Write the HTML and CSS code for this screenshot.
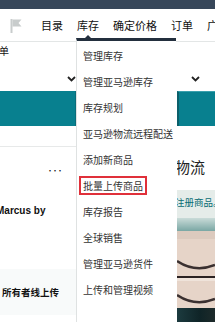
FILE: index.html
```html
<!DOCTYPE html>
<html lang="zh">
<head>
<meta charset="utf-8">
<link rel="stylesheet" href="styles.css">
</head>
<body>
<div class="topbar"></div>
<nav class="nav">
  <svg class="flag" width="14" height="15" viewBox="0 0 14 15"><path d="M1.5 1v14" stroke="#c8cccc" stroke-width="2"/><path d="M2.5 1.5h9l-3 3.5 3 3.5h-9z" fill="#c8cccc"/></svg>
  <span class="nav-item">目录</span>
  <span class="nav-item">库存</span>
  <span class="nav-item">确定价格</span>
  <span class="nav-item">订单</span>
  <span class="nav-item">广告</span>
</nav>
<div class="page">
  <div class="col-left">
    <div class="crumb"><span class="crumb-text">订单</span></div>
    <div class="select"><svg width="9" height="6" viewBox="0 0 9 6"><path d="M1 1l3.5 3.5L8 1" stroke="#222" stroke-width="1.8" fill="none"/></svg></div>
    <div class="teal teal-left"></div>
    <div class="rule"></div>
    <div class="dots">•••</div>
    <div class="name">Marcus by</div>
    <div class="panel"><span class="panel-text">所有者线上传</span></div>
  </div>
  <div class="col-mid"></div>
  <div class="col-right">
    <div class="crumb"></div>
    <div class="select select-right"><svg width="9" height="6" viewBox="0 0 9 6"><path d="M1 1l3.5 3.5L8 1" stroke="#222" stroke-width="1.8" fill="none"/></svg></div>
    <div class="teal teal-right"></div>
    <div class="heading">物流</div>
    <div class="promo"><span class="promo-text">注册商品。</span></div>
    <div class="stripe"></div>
    <svg class="photo" width="38" height="77" viewBox="0 0 38 77">
      <rect width="38" height="77" fill="#e6d4c8"/>
      <rect y="0" width="38" height="8" fill="#dccabe"/>
      <path d="M0 30 Q18 42 38 34" stroke="#3a3030" stroke-width="2.5" fill="none"/>
      <rect y="45" width="38" height="2" fill="#2b2222"/>
      <rect y="47" width="38" height="3" fill="#efe3da"/>
      <path d="M0 64 Q18 76 38 68" stroke="#3a3030" stroke-width="2.5" fill="none"/>
    </svg>
    <div class="photo-dark"></div>
  </div>
</div>
<div class="dropdown">
  <div class="caret"></div>
  <ul class="menu">
    <li class="menu-item">管理库存</li>
    <li class="menu-item">管理亚马逊库存</li>
    <li class="menu-item">库存规划</li>
    <li class="menu-item">亚马逊物流远程配送</li>
    <li class="menu-item">添加新商品</li>
    <li class="menu-item"><span class="highlight">批量上传商品</span></li>
    <li class="menu-item">库存报告</li>
    <li class="menu-item">全球销售</li>
    <li class="menu-item">管理亚马逊货件</li>
    <li class="menu-item">上传和管理视频</li>
  </ul>
</div>
</body>
</html>
```
FILE: styles.css
```css
html, body {
  margin: 0;
  padding: 0;
}
body {
  width: 215px;
  height: 322px;
  overflow: hidden;
  position: relative;
  background: #fff;
  font-family: "Noto Sans CJK SC", "Liberation Sans", sans-serif;
  color: #111;
}
.topbar {
  height: 9px;
  background: #37475a;
}
.nav {
  height: 32px;
  display: flex;
  align-items: center;
  gap: 14px;
  padding-left: 10px;
  border-bottom: 1px solid #e3e6e6;
  white-space: nowrap;
  font-size: 11px;
  overflow: hidden;
}
.flag {
  flex: none;
  margin-right: 3px;
}
.nav-item {
  flex: none;
  line-height: 14px;
}
.page {
  display: flex;
  height: 280px;
}
.col-left {
  width: 76px;
  flex: none;
  display: flex;
  flex-direction: column;
  overflow: hidden;
}
.col-mid {
  width: 101px;
  flex: none;
}
.col-right {
  flex: 1;
  display: flex;
  flex-direction: column;
  overflow: hidden;
}
.crumb {
  height: 14px;
  font-size: 10px;
  line-height: 14px;
  padding-top: 2px;
  white-space: nowrap;
  flex: none;
}
.crumb-text {
  display: inline-block;
  margin-left: -11px;
}
.select {
  height: 32px;
  display: flex;
  justify-content: flex-end;
  align-items: center;
  padding-top: 9px;
  box-sizing: border-box;
  flex: none;
}
.select-right {
  justify-content: flex-start;
  padding-left: 14px;
}
.teal {
  height: 35px;
  box-sizing: border-box;
  background: #08808f;
  margin-top: 1px;
  flex: none;
}
.teal-left {
  border-right: 1px solid #0a6d7a;
}
.teal-right {
  border-left: 2px solid #0b5f6a;
  border-top: 1px solid #3aa0ad;
}
.rule {
  height: 1px;
  background: #e7e9e9;
  margin-top: 20px;
  flex: none;
}
.dots {
  margin-top: 19px;
  font-size: 6px;
  line-height: 10px;
  text-align: right;
  padding-right: 14px;
  letter-spacing: -1px;
  color: #111;
  font-weight: bold;
}
.name {
  margin-top: 29px;
  font-family: "Liberation Sans", sans-serif;
  font-weight: bold;
  font-size: 10px;
  line-height: 12px;
  white-space: nowrap;
  margin-left: -4px;
  color: #111;
}
.panel {
  margin-top: 52px;
  height: 46px;
  background: #f8fafa;
  display: flex;
  align-items: center;
  padding-left: 2px;
  flex: none;
}
.panel-text {
  font-size: 9.5px;
  font-weight: bold;
  white-space: nowrap;
  color: #111;
}
.heading {
  margin-top: 31px;
  font-size: 15px;
  line-height: 20px;
  color: #222;
  white-space: nowrap;
  margin-left: -2px;
  flex: none;
}
.promo {
  margin-top: 13px;
  height: 28px;
  background: #e5ece9;
  display: flex;
  padding-top: 6px;
  box-sizing: border-box;
  flex: none;
}
.promo-text {
  font-size: 9.5px;
  line-height: 12px;
  color: #0a6c74;
  white-space: nowrap;
  margin-left: -2px;
}
.stripe {
  height: 13px;
  background: linear-gradient(#c9dbd8, #7aa7a4);
  flex: none;
}
.photo {
  display: block;
  flex: none;
}
.photo-dark {
  height: 24px;
  flex: none;
  background: linear-gradient(90deg, #1c3b3f, #0f2427 60%, #1d2a2a);
}
.dropdown {
  position: absolute;
  left: 76px;
  top: 38px;
  width: 100px;
  height: 290px;
  background: #fff;
  border-top: 3px solid #232f3e;
  border-left: 1px solid #dfe2e2;
  box-sizing: border-box;
}
.caret {
  position: absolute;
  left: 8px;
  top: -6px;
  width: 0;
  height: 0;
  border-left: 3px solid transparent;
  border-right: 3px solid transparent;
  border-bottom: 3px solid #232f3e;
}
.menu {
  list-style: none;
  margin: 0;
  padding: 2px 0 0 6px;
}
.menu-item {
  height: 26px;
  line-height: 26px;
  font-size: 10px;
  color: #333;
  white-space: nowrap;
}
.highlight {
  display: inline-block;
  line-height: 15px;
  padding: 0 2px 0 2px;
  margin-left: -4px;
  border: 2px solid #e0303a;
}
```
